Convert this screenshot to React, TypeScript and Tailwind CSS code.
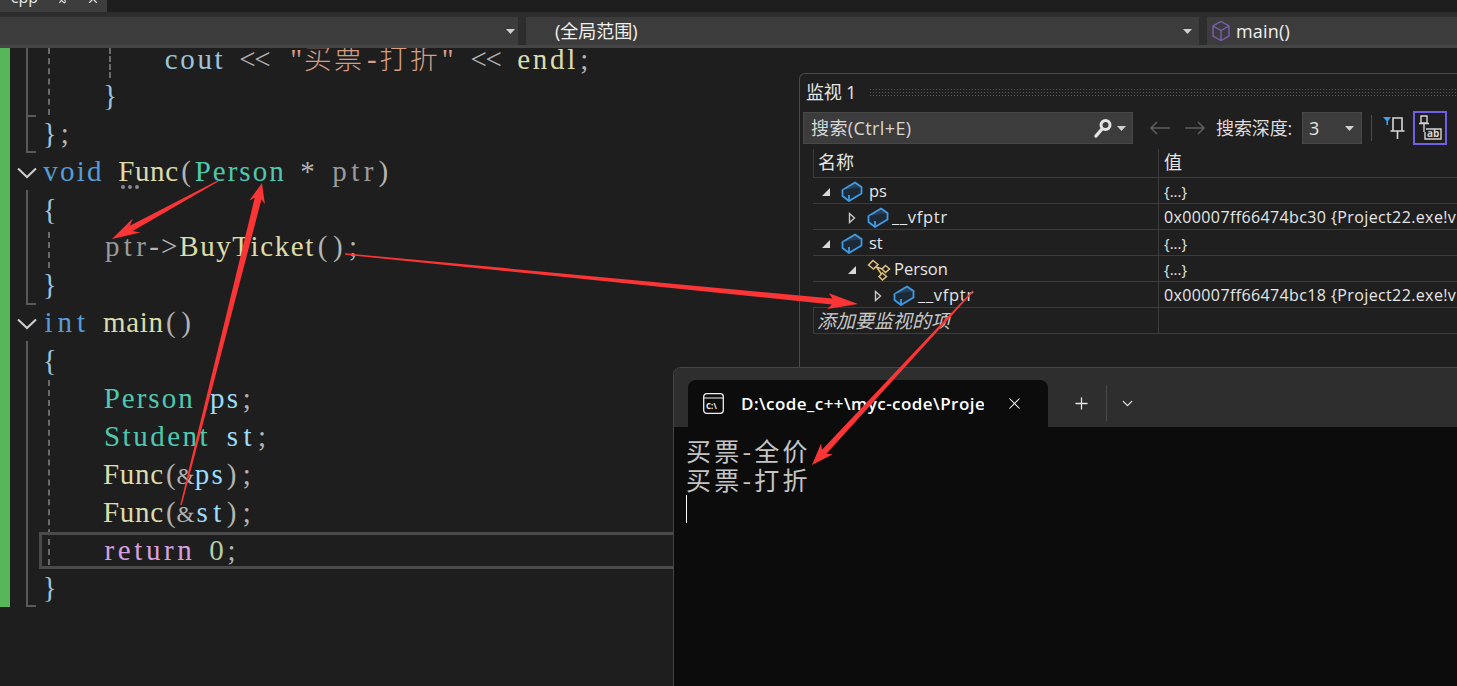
import React from "react";
import { Pin, X, Plus, ChevronDown } from "lucide-react";

const ui = "font-['Open_Sans','Noto_Sans_CJK_SC',sans-serif]";

function Arrow({ t, h, w1 = 7, w2 = 3.2, len = 32, back = 24 }: { t: number[]; h: number[]; w1?: number; w2?: number; len?: number; back?: number }) {
  const dx = h[0] - t[0], dy = h[1] - t[1];
  const d = Math.hypot(dx, dy);
  const ux = dx / d, uy = dy / d, nx = -uy, ny = ux;
  const p = (b: number, s: number) => `${h[0] - ux * b + nx * s},${h[1] - uy * b + ny * s}`;
  const tw = 0.7;
  return <polygon fill="#fb3535" points={`${t[0] + nx * tw},${t[1] + ny * tw} ${p(back, w2)} ${p(len, w1)} ${h[0]},${h[1]} ${p(len, -w1)} ${p(back, -w2)} ${t[0] - nx * tw},${t[1] - ny * tw}`} />;
}

function Box() {
  return (
    <svg width="22" height="21" viewBox="0 0 22 21" fill="none" stroke="#3f9be3" strokeWidth="1.8" strokeLinejoin="round" className="shrink-0">
      <path d="M1.5 9 L14 1.5 L20.5 6 L8 14 Z" fill="#2b3f54" />
      <path d="M1.5 9 V15 L8 20 L20.5 12.5 V6" fill="#1c2a38" />
      <path d="M8 14 V20" />
    </svg>
  );
}

function Struct() {
  return (
    <svg width="24" height="22" viewBox="0 0 24 22" fill="none" stroke="#e2c27f" strokeWidth="1.5" className="shrink-0">
      <path d="M6 1.5 L11 5.5 L6.5 10 L1.5 6 Z" fill="#1f1f1f" />
      <path d="M18.5 6.5 L22.5 10 L18.5 13.5 L15 10 Z" fill="#1f1f1f" />
      <path d="M15.5 14 L19.5 17.5 L15.5 21 L12 17.5 Z" fill="#1f1f1f" />
      <path d="M9 8 L15.5 10 M9.5 8 L14.5 15" />
    </svg>
  );
}

function Tri({ open }: { open?: boolean }) {
  return open ? (
    <svg width="10" height="10" viewBox="0 0 10 10"><path d="M9 1 V9 H1 Z" fill="#d8d8d8" /></svg>
  ) : (
    <svg width="8" height="12" viewBox="0 0 8 12"><path d="M1.5 1.5 L6.5 6 L1.5 10.5 Z" fill="#1f1f1f" stroke="#c8c8c8" strokeWidth="1.4" /></svg>
  );
}

function Caret({ c = "#d0d0d0" }: { c?: string }) {
  return <svg width="9" height="5" viewBox="0 0 9 5"><path d="M0 0 H9 L4.5 5 Z" fill={c} /></svg>;
}

function Fold({ cls }: { cls: string }) {
  return (
    <svg width="20" height="12" viewBox="0 0 20 12" className={`absolute ${cls}`} fill="none" stroke="#d0d0d0" strokeWidth="2">
      <path d="M1 1.5 L10 10 L19 1.5" />
    </svg>
  );
}

const K = "text-[#569cd6]", F = "text-[#dcdcaa]", T = "text-[#4ec9b0]", P = "text-[#9a9a9a]", V = "text-[#9cdcfe]", O = "text-[#b4b4b4]", S = "text-[#d69d85]", R = "text-[#d8a0df]", N = "text-[#b5cea8]", B = "text-[#9cc4dc]";

const CELL = 15.17;
const FS = 29;
const ADV: Record<string, number> = {
  a: .444, b: .5, c: .444, d: .5, e: .444, f: .333, g: .5, h: .5, i: .278, j: .278, k: .5, l: .278, m: .778, n: .5, o: .5, p: .5, q: .5, r: .333, s: .389, t: .278, u: .5, v: .5, w: .722, x: .5, y: .5, z: .444,
  B: .667, F: .556, P: .556, S: .556, T: .611,
  "(": .333, ")": .333, ";": .278, "{": .48, "}": .48, "*": .5, "-": .333, ">": .564, "<": .564, '"': .408, "0": .5,
};

function W({ c, t }: { c?: string; t: string }) {
  const natural = t.split("").reduce((s, ch) => s + (ADV[ch] ?? 0.5) * FS, 0);
  const ls = (t.length * CELL - natural) / t.length;
  return (
    <span className={`inline-block whitespace-pre ${c ?? ""}`} style={{ width: t.length * CELL, letterSpacing: ls, paddingLeft: ls / 2 }}>
      {t}
    </span>
  );
}

function Amp() {
  return <span className="inline-block w-[15.17px] text-[23px] leading-none -ml-[2px] mr-[2px]">&amp;</span>;
}

function Sp({ n = 1 }: { n?: number }) {
  return <span className="inline-block h-0" style={{ width: n * CELL }} />;
}

function L({ children }: { children?: React.ReactNode }) {
  return <div className="h-[37.9px] leading-[37.9px] whitespace-nowrap">{children}</div>;
}

const rows: { indent: number; open: boolean; icon: "box" | "struct"; name: string; value: string }[] = [
  { indent: 0, open: true, icon: "box", name: "ps", value: "{...}" },
  { indent: 1, open: false, icon: "box", name: "__vfptr", value: "0x00007ff66474bc30 {Project22.exe!v" },
  { indent: 0, open: true, icon: "box", name: "st", value: "{...}" },
  { indent: 1, open: true, icon: "struct", name: "Person", value: "{...}" },
  { indent: 2, open: false, icon: "box", name: "__vfptr", value: "0x00007ff66474bc18 {Project22.exe!v" },
];

function Watch() {
  return (
    <div className={`absolute left-[799px] top-[73px] right-0 h-[300px] bg-[#1f1f1f] border-l border-t border-[#4a4a4a] rounded-tl-md overflow-hidden text-[#e6e6e6] ${ui}`}>
      <div className="flex items-center h-[36px] pl-[6px]">
        <span className="text-[18px] whitespace-nowrap tracking-[-0.2px]">监视 1</span>
        <div className="ml-[13px] flex-1 h-[8px] bg-[radial-gradient(#5a5a5a_1px,transparent_1px)] bg-[length:3px_3px]" />
      </div>
      <div className="flex items-center h-[34px] pl-[3px] mt-[1px]">
        <div className="w-[330px] h-[32px] bg-[#3c3c3c] border border-[#484848] flex items-center pl-[7px] pr-[6px]">
          <span className="flex-1 text-[#d8d8d8] text-[18px] tracking-[0.4px]">搜索(Ctrl+E)</span>
          <svg width="22" height="22" viewBox="0 0 22 22" fill="none" stroke="#e4e4e4">
            <circle cx="13.5" cy="8" r="4.5" strokeWidth="3" />
            <path d="M10 12 L4 19" strokeWidth="3.4" strokeLinecap="round" />
          </svg>
          <span className="ml-[3px]"><Caret /></span>
        </div>
        <svg width="22" height="14" viewBox="0 0 22 14" className="ml-[16px]" fill="none" stroke="#5e5e5e" strokeWidth="1.5"><path d="M21 7 H2 M8 1 L2 7 L8 13" /></svg>
        <svg width="22" height="14" viewBox="0 0 22 14" className="ml-[13px]" fill="none" stroke="#5e5e5e" strokeWidth="1.5"><path d="M1 7 H20 M14 1 L20 7 L14 13" /></svg>
        <span className="ml-[10px] text-[18px] text-[#dedede] whitespace-nowrap w-[86px] tracking-[-0.1px]">搜索深度:</span>
        <div className="w-[60px] h-[32px] bg-[#3c3c3c] border border-[#484848] flex items-center justify-between pl-[6px] pr-[7px]">
          <span className="text-[18px]">3</span>
          <Caret />
        </div>
        <div className="ml-[9px] w-[1px] h-[26px] bg-[#4c4c4c]" />
        <svg width="24" height="28" viewBox="0 0 24 28" className="ml-[11px] shrink-0" fill="none">
          <path d="M0 3 H8 L5 7 V11 H3.5 V7 Z" fill="#3fa4ee" />
          <path d="M10 4 H19 V17 H10 Z M7.5 17 H21.5 M14.5 17 V25" stroke="#d8d8d8" strokeWidth="1.6" />
        </svg>
        <div className="ml-[6px] shrink-0 w-[34px] h-[34px] border-2 border-[#6f5fe6] flex items-center justify-center">
          <svg width="28" height="28" viewBox="0 0 28 28" fill="none" stroke="#d4d4d4" strokeWidth="1.4">
            <path d="M5 2 H11 V9 H5 Z M3 9.5 H13 M8 10 V18" />
            <path d="M10 15 H25 V25 H9 V18" />
            <text x="11" y="23" fontSize="10" fontWeight="700" fill="#d4d4d4" stroke="none" fontFamily="'Open Sans',sans-serif">ab</text>
          </svg>
        </div>
      </div>
      <div className="flex h-[29px] mt-[4px] ml-[13px] border-b border-[#3c3c3c]">
        <div className="w-[346px] border-l border-r border-[#3c3c3c] pl-[4px] leading-[27px] text-[18px]">名称</div>
        <div className="pl-[5px] leading-[27px] text-[18px]">值</div>
      </div>
      <div className="ml-[13px]">
        {rows.map((r, i) => (
          <div key={i} className="flex h-[26px] border-b border-[#3c3c3c]">
            <div className="w-[346px] shrink-0 border-r border-[#3c3c3c] flex items-center pt-[2px] whitespace-nowrap">
              <span className={`w-[20px] shrink-0 flex justify-end ${r.indent === 1 ? "ml-[26px]" : r.indent === 2 ? "ml-[52px]" : "ml-0"} ${r.open ? "pr-[2px]" : "pr-[3px]"}`}><Tri open={r.open} /></span>
              <span className="ml-[8px] flex items-center">
                {r.icon === "box" ? <Box /> : <Struct />}
              </span>
              <span className={`${r.icon === "box" && r.indent === 0 ? "ml-[6px]" : "ml-[3px]"} text-[16.5px] ${r.name === "__vfptr" ? "tracking-[0.7px]" : ""}`}>{r.name}</span>
            </div>
            <div className={`pl-[5px] leading-[27px] whitespace-nowrap ${r.value === "{...}" ? "text-[15px]" : "text-[16px] tracking-[0.38px]"}`}>{r.value}</div>
          </div>
        ))}
        <div className="flex h-[26px] border-b border-[#3c3c3c]">
          <div className="w-[346px] shrink-0 border-l border-r border-[#3c3c3c] pl-[3px] leading-[27px] italic text-[#c8c8c8] text-[19px] whitespace-nowrap">添加要监视的项</div>
          <div />
        </div>
      </div>
    </div>
  );
}

function Terminal() {
  return (
    <div className={`absolute left-[673px] top-[367px] right-0 bottom-0 bg-[#0c0c0c] border-l border-t border-[#454545] rounded-tl-lg overflow-hidden ${ui}`}>
      <div className="flex h-[59px] bg-[#2e2e2e] pt-[12px] pl-[14px] items-start">
        <div className="w-[360px] h-[47px] bg-[#0c0c0c] rounded-t-lg flex items-center pl-[15px] pr-[24px] text-white">
          <svg width="21" height="21" viewBox="0 0 21 21" fill="none" className="shrink-0">
            <rect x="0.7" y="0.7" width="19.6" height="19.6" rx="3" stroke="#f0f0f0" strokeWidth="1.3" />
            <path d="M1 5 H20" stroke="#f0f0f0" strokeWidth="1.2" />
            <text x="3" y="16" fontSize="8" fontWeight="700" fill="#f0f0f0" fontFamily="'Open Sans',sans-serif">C:\</text>
          </svg>
          <span className="ml-[17px] w-[245px] overflow-hidden whitespace-nowrap text-[17px] tracking-[0.45px] font-semibold">D:\code_c++\myc-code\Project22</span>
          <X size={19} strokeWidth={1.3} className="ml-[21px] shrink-0" />
        </div>
        <Plus size={19} strokeWidth={1.6} className="ml-[24px] mt-[14px] text-[#e8e8e8]" />
        <div className="ml-[15px] mt-[5px] w-[1px] h-[36px] bg-[#4a4a4a]" />
        <ChevronDown size={17} strokeWidth={1.8} className="ml-[12px] mt-[15px] text-[#e8e8e8]" />
      </div>
      <div className="pl-[12px] pt-[9px] text-[25px] leading-[29px] text-[#c4c4c4] tracking-[3.2px] font-['Noto_Sans_CJK_SC',sans-serif]">
        <div>买票-全价</div>
        <div>买票-打折</div>
        <div className="w-[1px] h-[28px] bg-white mt-[1px]" />
      </div>
    </div>
  );
}

export default function App() {
  return (
    <div className="relative w-[1457px] h-[686px] overflow-hidden bg-[#1e1e1e] flex flex-col">
      {/* doc tab strip */}
      <div className="h-[12px] shrink-0 overflow-hidden bg-[#1e1e1e]">
        <div className={`w-[107px] h-[12px] bg-[#3d3d3d] flex items-start text-[#e8e8e8] text-[16px] leading-[16px] ${ui}`}>
          <span className="-mt-[11px] w-[57px] text-right pr-[19px]">cpp</span>
          <Pin size={13} className="-mt-[8px] rotate-45" />
          <X size={14} className="-mt-[8px] ml-[16px]" />
        </div>
      </div>
      {/* navigation bar */}
      <div className={`h-[36px] shrink-0 bg-[#2d2d2d] border-b-[3px] border-[#454545] pt-[5px] flex text-[18px] text-[#f0f0f0] ${ui}`}>
        <div className="w-[518px] bg-[#3c3c3c] flex items-center justify-end pr-[3px]"><Caret /></div>
        <div className="ml-[8px] w-[673px] bg-[#3c3c3c] flex items-center pl-[29px] justify-between pr-[7px]">
          <span>(全局范围)</span>
          <Caret />
        </div>
        <div className="ml-[8px] flex-1 bg-[#3c3c3c] flex items-center pl-[4px]">
          <svg width="20" height="22" viewBox="0 0 20 22" fill="none" stroke="#7a5fb0" strokeWidth="1.4">
            <path d="M10 1.5 L18 6 V16 L10 20.5 L2 16 V6 Z M2 6 L10 10.5 L18 6 M10 10.5 V20.5" />
          </svg>
          <span className="ml-[5px] tracking-[0.2px]">main()</span>
        </div>
      </div>
      {/* editor */}
      <div className="relative flex-1 overflow-hidden">
        <div className="absolute left-0 top-0 w-[10px] h-[559px] bg-[#57b65a]" />
        <div className="-mt-[9px] pl-[42px] font-['Liberation_Serif','Noto_Sans_CJK_SC',serif] text-[29px] text-[#b4b4b4]">
          <L>
            <Sp n={8} /><W c={B} t="cout" /><Sp /><W c={O} t="<<" /><Sp n={1.25} /><W c={S} t={'"'} />
            <span className={`inline-block w-[60.68px] tracking-[2.34px] text-[28px] font-light font-['Noto_Sans_CJK_SC',sans-serif] ${S}`}>买票</span>
            <W c={S} t="-" />
            <span className={`inline-block w-[60.68px] tracking-[2.34px] text-[28px] font-light font-['Noto_Sans_CJK_SC',sans-serif] ${S}`}>打折</span>
            <W c={S} t={'"'} /><Sp /><W c={O} t="<<" /><Sp /><W c={F} t="endl" /><W t=";" />
          </L>
          <L><Sp n={4} /><W c={B} t="}" /></L>
          <L><W c={B} t="}" /><W t=";" /></L>
          <L><W c={K} t="void" /><Sp /><W c={F} t="Func" /><W t="(" /><W c={T} t="Person" /><Sp /><W t="*" /><Sp /><W c={P} t="ptr" /><W t=")" /></L>
          <L><W c={B} t="{" /></L>
          <L><Sp n={4} /><W c={P} t="ptr" /><W t="->" /><W c={F} t="BuyTicket" /><W t="()" /><W t=";" /></L>
          <L><W c={B} t="}" /></L>
          <L><W c={K} t="int" /><Sp /><W c={F} t="main" /><W t="()" /></L>
          <L><W c={B} t="{" /></L>
          <L><Sp n={4} /><W c={T} t="Person" /><Sp /><W c={V} t="ps" /><W t=";" /></L>
          <L><Sp n={4} /><W c={T} t="Student" /><Sp /><W c={V} t="st" /><W t=";" /></L>
          <L><Sp n={4} /><W c={F} t="Func" /><W t="(" /><Amp /><W c={V} t="ps" /><W t=")" /><W t=";" /></L>
          <L><Sp n={4} /><W c={F} t="Func" /><W t="(" /><Amp /><W c={V} t="st" /><W t=")" /><W t=";" /></L>
          <L><Sp n={4} /><W c={R} t="return" /><Sp /><W c={N} t="0" /><W t=";" /></L>
          <L><W c={B} t="}" /></L>
        </div>

        {/* outlining guides, over the code */}
        <div className="absolute left-[26px] top-0 w-[10px] h-[105px] border-l-2 border-b-2 border-[#5a5a5a]" />
        <div className="absolute left-[26px] top-[67px] w-[10px] h-0 border-t-2 border-[#5a5a5a]" />
        <div className="absolute left-[26px] top-[142px] w-[10px] h-[115px] border-l-2 border-b-2 border-[#5a5a5a]" />
        <div className="absolute left-[26px] top-[293px] w-[10px] h-[266px] border-l-2 border-b-2 border-[#5a5a5a]" />
        <div className="absolute left-[48px] top-0 h-[67px] border-l-2 border-dashed border-[#6a6a6a]" />
        <div className="absolute left-[109px] top-0 h-[30px] border-l-2 border-dashed border-[#6a6a6a]" />
        <div className="absolute left-[48px] top-[184px] h-[36px] border-l-2 border-dashed border-[#6a6a6a]" />
        <div className="absolute left-[48px] top-[332px] h-[185px] border-l-2 border-dashed border-[#6a6a6a]" />
        <Fold cls="left-[17px] top-[119px]" />
        <Fold cls="left-[17px] top-[270px]" />
        <div className="absolute left-[121px] top-[137px] flex gap-[3px]">
          <span className="w-[4px] h-[4px] rounded-full bg-[#8a8a8a]" />
          <span className="w-[4px] h-[4px] rounded-full bg-[#8a8a8a]" />
          <span className="w-[4px] h-[4px] rounded-full bg-[#8a8a8a]" />
        </div>
        <div className="absolute left-[39px] top-[484px] w-[640px] h-[37px] border-[3px] border-[#4a4a4a]" />
      </div>

      <Watch />
      <Terminal />

      <svg className="absolute left-0 top-0 pointer-events-none" width="1457" height="686" viewBox="0 0 1457 686">
        <Arrow t={[218, 181]} h={[112, 239]} w1={8} w2={3} len={28} back={22} />
        <Arrow t={[181, 505]} h={[262, 183]} w1={8} w2={3.5} len={20} back={16} />
        <Arrow t={[345, 254]} h={[858, 304]} w1={8} w2={3} len={30} back={26} />
        <Arrow t={[973, 291]} h={[812, 465]} w1={8} w2={3} len={22} back={18} />
      </svg>
    </div>
  );
}
